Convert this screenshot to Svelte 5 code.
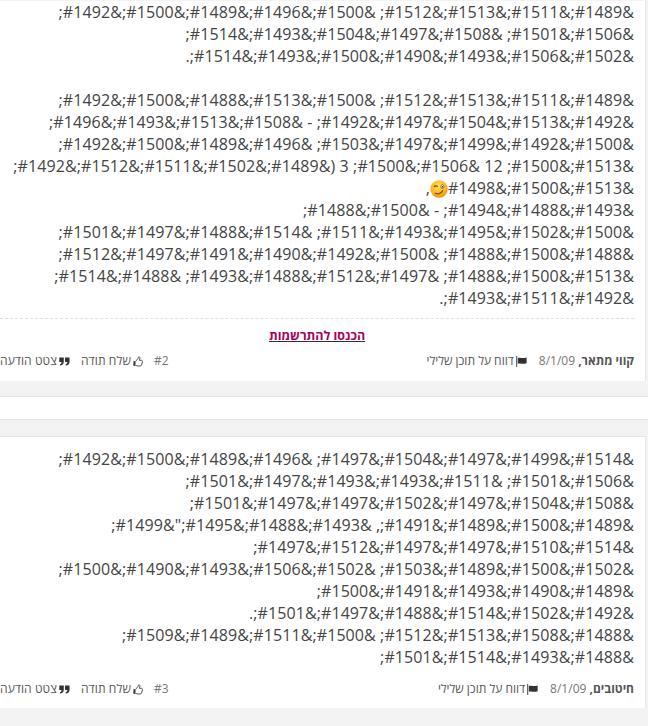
<script>
  const post1A = [
    '&#1489;&#1511;&#1513;&#1512; &#1500;&#1496;&#1489;&#1500;&#1492;',
    '&#1506;&#1501; &#1508;&#1497;&#1504;&#1493;&#1514;',
    '&#1502;&#1506;&#1493;&#1490;&#1500;&#1493;&#1514;.',
    '',
    '&#1489;&#1511;&#1513;&#1512; &#1500;&#1513;&#1488;&#1500;&#1492;',
    '&#1492;&#1513;&#1504;&#1497;&#1492; - &#1508;&#1513;&#1493;&#1496;',
    '&#1500;&#1492;&#1499;&#1497;&#1503; &#1496;&#1489;&#1500;&#1492;',
    '&#1513;&#1500; 12 &#1506;&#1500; 3 (&#1489;&#1502;&#1511;&#1512;&#1492;'
  ];
  const post1B = [
    '&#1493;&#1488;&#1494; - &#1500;&#1488;',
    '&#1500;&#1502;&#1495;&#1493;&#1511; &#1514;&#1488;&#1497;&#1501;',
    '&#1488;&#1500;&#1488; &#1500;&#1492;&#1490;&#1491;&#1497;&#1512;',
    '&#1513;&#1500;&#1488; &#1497;&#1512;&#1488;&#1493; &#1488;&#1514;',
    '&#1492;&#1511;&#1493;.'
  ];
  const post2 = [
    '&#1514;&#1499;&#1497;&#1504;&#1497; &#1496;&#1489;&#1500;&#1492;',
    '&#1506;&#1501; &#1511;&#1493;&#1493;&#1497;&#1501;',
    '&#1508;&#1504;&#1497;&#1502;&#1497;&#1497;&#1501;',
    '&#1489;&#1500;&#1489;&#1491;, &#1493;&#1488;&#1495;"&#1499;',
    '&#1514;&#1510;&#1497;&#1497;&#1512;&#1497;',
    '&#1502;&#1500;&#1489;&#1503; &#1502;&#1506;&#1493;&#1490;&#1500;',
    '&#1489;&#1490;&#1493;&#1491;&#1500;',
    '&#1492;&#1502;&#1514;&#1488;&#1497;&#1501;.',
    '&#1488;&#1508;&#1513;&#1512; &#1500;&#1511;&#1489;&#1509;',
    '&#1488;&#1493;&#1514;&#1501;'
  ];
</script>

{#snippet footer(name, num)}
  <div class="foot">
    <div class="meta">
      <span class="who"><b>{name},</b> <span class="date">8/1/09</span></span>
      <span class="act report">
        <svg class="ico" width="11" height="11" viewBox="0 0 12 12"><path d="M.3 0h1v12h-1z"/><path d="M2 2.2C4 .9 6.5 3.2 11.6 1.7V8C6.5 9.5 4 7.2 2 8.5Z"/></svg>
        דווח על תוכן שלילי
      </span>
    </div>
    <div class="meta left">
      <span class="num">#{num}</span>
      <span class="act">
        <svg class="ico" width="10" height="11" viewBox="0 0 11 12"><path d="M.5 5.6h2.4v5.2H.5z"/><path class="line" d="M3 5.8 5.6 2.4c.2-1 .4-1.6 1-1.6.9 0 1.2 1.2.9 2.2L7 4.7h2.4c.9 0 1.3.8 1 1.6L9.3 10c-.2.6-.6.9-1.2.9H5.2L3 10.3"/></svg>
        שלח תודה
      </span>
      <span class="act">
        <svg class="ico" width="11" height="9" viewBox="0 0 12 10"><path d="M.2.5h5v4.8c0 2.4-1.6 4-4.2 4.2V8c1.1-.1 1.7-.8 1.7-2.4H.2z"/><path d="M6.6.5h5v4.8c0 2.4-1.6 4-4.2 4.2V8c1.1-.1 1.7-.8 1.7-2.4H6.6z"/></svg>
        צטט הודעה
      </span>
    </div>
  </div>
{/snippet}

<div class="page" dir="rtl">
  <article class="post first">
    <div class="body">
      {#each post1A as line}
        <div class="ln">{line}</div>
      {/each}
      <div class="ln">&amp;#1513;&amp;#1500;&amp;#1498<svg class="emoji" width="18" height="18" viewBox="0 0 17 17">
        <defs>
          <radialGradient id="face" cx="45%" cy="35%" r="70%">
            <stop offset="0" stop-color="#ffe14d"/>
            <stop offset="0.65" stop-color="#fbb41e"/>
            <stop offset="1" stop-color="#e8860c"/>
          </radialGradient>
        </defs>
        <circle cx="8.5" cy="8.5" r="8.2" fill="url(#face)"/>
        <path d="M3.6 6.4c1-1 2.6-1 3.6 0" fill="none" stroke="#7a4a08" stroke-width="1.1"/>
        <ellipse cx="11.6" cy="6.2" rx="1.5" ry="1.8" fill="#fff" stroke="#7a4a08" stroke-width=".6"/>
        <circle cx="11.7" cy="6.4" r=".8" fill="#3a2a10"/>
        <path d="M4.6 12.4c2.6 1.3 6 .6 7.6-2.6" fill="none" stroke="#8a5208" stroke-width="1.2"/>
      </svg>,</div>
      {#each post1B as line}
        <div class="ln">{line}</div>
      {/each}
    </div>
    <div class="signup">
      <a href="#signup">הכנסו להתרשמות</a>
    </div>
    {@render footer('קווי מתאר', 2)}
  </article>

  <div class="strip"></div>

  <article class="post second">
    <div class="body">
      {#each post2 as line}
        <div class="ln">{line}</div>
      {/each}
    </div>
    {@render footer('חיטובים', 3)}
  </article>
</div>

<style>
  :global(html), :global(body) {
    margin: 0;
    background: #f3f3f3;
    overflow: hidden;
  }
  .page {
    width: 648px;
    height: 726px;
    overflow: hidden;
    font-family: "Open Sans", "Noto Sans", sans-serif;
    color: #444;
    font-size: 16px;
    line-height: 22px;
    padding-top: 1px;
    box-sizing: border-box;
  }
  .post {
    background: #fff;
    margin-right: 2px;
    border-right: 1px solid #e6e6e6;
    padding-right: 11px;
  }
  .first {
    padding-bottom: 4px;
  }
  .second {
    border-top: 1px solid #e2e2e2;
    padding-top: 11px;
    padding-bottom: 3px;
  }
  .body {
    white-space: nowrap;
    letter-spacing: 0.095px;
  }
  .first .body {
    padding-bottom: 9px;
    border-bottom: 1px dashed #e0e0e0;
  }
  .ln {
    min-height: 22px;
  }
  .emoji {
    vertical-align: -4px;
  }
  .signup {
    text-align: center;
    font-size: 12.5px;
    font-weight: 700;
    line-height: 16px;
    padding-top: 9px;
    padding-bottom: 1px;
  }
  .signup a {
    color: #a8005c;
    text-decoration: underline;
    text-decoration-color: #333;
  }
  .foot {
    display: flex;
    justify-content: space-between;
    align-items: center;
    height: 32px;
    font-size: 12px;
    line-height: 16px;
    color: #555;
    white-space: nowrap;
  }
  .second .foot {
    margin-top: 5px;
  }
  .meta {
    display: flex;
    align-items: center;
    gap: 12px;
  }
  .left {
    gap: 11px;
  }
  .left .act {
    letter-spacing: 0.1px;
  }
  .meta b {
    font-weight: 700;
  }
  .date, .num {
    color: #777;
  }
  .act {
    display: inline-flex;
    align-items: center;
    gap: 2px;
  }
  .ico {
    fill: #333;
    flex: none;
  }
  .line {
    fill: #fff;
    stroke: #444;
    stroke-width: 1;
  }
  .strip {
    height: 22px;
    margin-top: 15px;
    margin-bottom: 16px;
    background: #fff;
    border-top: 1px solid #e2e2e2;
    border-bottom: 1px solid #e2e2e2;
  }
</style>
